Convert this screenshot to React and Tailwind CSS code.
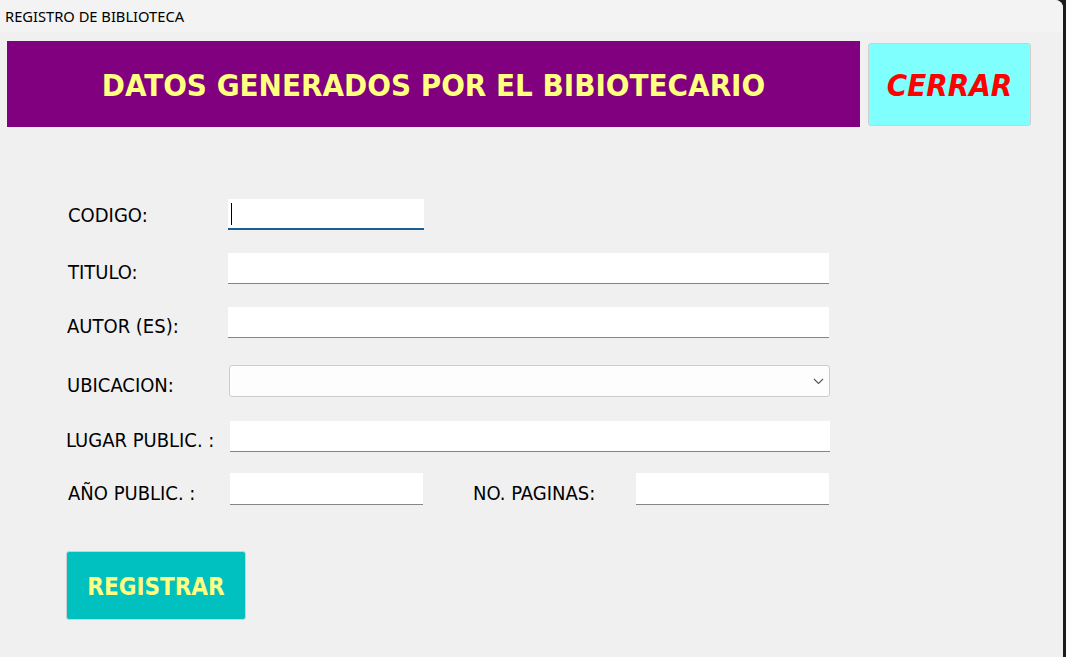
const font = { fontFamily: '"DejaVu Sans Condensed", "DejaVu Sans", sans-serif' };

function Field({ className = "", focused = false }) {
  return (
    <div
      className={
        "h-[31px] bg-white relative " +
        (focused ? "border-b-2 border-[#1a5e92]" : "border-b border-[#858585]") +
        " " +
        className
      }
    >
      {focused && <div className="absolute left-[3px] top-[4px] w-px h-[22px] bg-black" />}
    </div>
  );
}

function Label({ children, className = "" }) {
  return <span className={"text-[20px] text-black leading-none " + className}>{children}</span>;
}

export default function App() {
  return (
    <div className="w-[1066px] h-[657px] bg-[#1c1c1c] flex overflow-hidden" style={font}>
      <div className="w-[1063px] h-full bg-[#f0f0f0] rounded-tr-[8px] overflow-hidden flex flex-col">
        <div className="h-[32px] bg-[#f3f3f3] flex items-center pl-[5px]">
          <span className="text-[14.7px] text-black" style={{ fontFamily: '"Noto Sans", sans-serif' }}>
            REGISTRO DE BIBLIOTECA
          </span>
        </div>

        <div className="flex items-center pt-[9px] pl-[7px]">
          <div className="w-[853px] h-[86px] bg-[#800080] flex items-center justify-center">
            <span className="text-[31px] font-bold text-[#ffff80] pt-[2px]">
              DATOS GENERADOS POR EL BIBIOTECARIO
            </span>
          </div>
          <button className="ml-[8px] w-[163px] h-[83px] bg-[#80ffff] border border-[#cfcfcf] rounded-[3px] flex items-center justify-center">
            <span className="text-[31px] font-bold italic text-[#ff0000] pt-[2px]">CERRAR</span>
          </button>
        </div>

        <div className="flex flex-col pt-[72px]">
          <div className="flex items-center h-[31px]">
            <Label className="ml-[68px] w-[160px] pt-[1px]">CODIGO:</Label>
            <Field focused className="w-[196px]" />
          </div>
          <div className="flex items-center h-[31px] mt-[23px]">
            <Label className="ml-[68px] w-[160px] pt-[7px]">TITULO:</Label>
            <Field className="w-[601px]" />
          </div>
          <div className="flex items-center h-[31px] mt-[23px]">
            <Label className="ml-[67px] w-[161px] pt-[7px]">AUTOR (ES):</Label>
            <Field className="w-[601px]" />
          </div>
          <div className="flex items-center h-[32px] mt-[27px]">
            <Label className="ml-[67px] w-[162px] pt-[7px]">UBICACION:</Label>
            <div className="w-[601px] h-[32px] bg-[#fdfdfd] border border-[#cccccc] rounded-[3px] flex items-center justify-end pr-[5px]">
              <svg width="11" height="7" viewBox="0 0 11 7" fill="none">
                <path d="M1 1 L5.5 5.5 L10 1" stroke="#555" strokeWidth="1.1" />
              </svg>
            </div>
          </div>
          <div className="flex items-center h-[31px] mt-[24px]">
            <Label className="ml-[66px] w-[164px] pt-[7px]">LUGAR PUBLIC. :</Label>
            <Field className="w-[600px]" />
          </div>
          <div className="flex items-center h-[32px] mt-[21px]">
            <Label className="ml-[68px] w-[162px] pt-[7px]">AÑO PUBLIC. :</Label>
            <Field className="w-[193px] h-[32px]" />
            <Label className="ml-[50px] w-[163px] pt-[7px]">NO. PAGINAS:</Label>
            <Field className="w-[193px] h-[32px]" />
          </div>
          <div className="pl-[66px] mt-[46px]">
            <button className="w-[180px] h-[69px] bg-[#00c0c0] border border-[#cfcfcf] rounded-[3px] flex items-center justify-center">
              <span className="text-[24px] font-bold text-[#ffff80] pt-[2px]">REGISTRAR</span>
            </button>
          </div>
        </div>
      </div>
    </div>
  );
}
